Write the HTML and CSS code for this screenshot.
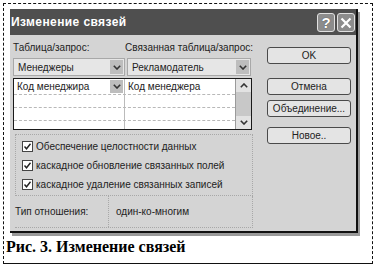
FILE: index.html
```html
<!DOCTYPE html>
<html lang="ru">
<head>
    <meta charset="UTF-8">
    <title>Изменение связей</title>
    <link rel="stylesheet" href="styles.css">
</head>
<body>
    <div class="sheet">
        <!-- Dialog window -->
        <div class="dialog">
            <div class="titlebar">
                <span class="title">Изменение связей</span>
                <div class="title-btns">
                    <span class="tbtn">?</span>
                    <span class="tbtn">
                        <svg width="12" height="12" viewBox="0 0 12 12"><path d="M1.5 1.5 L10.5 10.5 M10.5 1.5 L1.5 10.5" stroke="#fff" stroke-width="2.2" fill="none"/></svg>
                    </span>
                </div>
            </div>

            <div class="body">
                <div class="left">
                    <div class="labels">
                        <span class="lbl l1">Таблица/запрос:</span>
                        <span class="lbl">Связанная таблица/запрос:</span>
                    </div>

                    <div class="combos">
                        <div class="combo c1">
                            <span class="val">Менеджеры</span>
                            <span class="drop"><svg width="8" height="5" viewBox="0 0 8 5"><polyline points="0.8,0.8 4,4 7.2,0.8" stroke="#333" stroke-width="1.6" fill="none"/></svg></span>
                        </div>
                        <div class="combo c2">
                            <span class="val">Рекламодатель</span>
                            <span class="drop"><svg width="8" height="5" viewBox="0 0 8 5"><polyline points="0.8,0.8 4,4 7.2,0.8" stroke="#333" stroke-width="1.6" fill="none"/></svg></span>
                        </div>
                    </div>

                    <!-- Fields grid -->
                    <div class="grid">
                        <div class="rows">
                            <div class="row first">
                                <div class="cell k1">
                                    <span class="val">Код менеджира</span>
                                    <span class="drop"><svg width="8" height="5" viewBox="0 0 8 5"><polyline points="0.8,0.8 4,4 7.2,0.8" stroke="#333" stroke-width="1.6" fill="none"/></svg></span>
                                </div>
                                <div class="cell k2"><span class="val">Код менеджера</span></div>
                            </div>
                            <div class="row dotted"><div class="cell k1"></div><div class="cell k2"></div></div>
                            <div class="row dotted"><div class="cell k1"></div><div class="cell k2"></div></div>
                            <div class="row"><div class="cell k1"></div><div class="cell k2"></div></div>
                        </div>
                        <div class="scroll">
                            <span class="sbtn"><svg width="8" height="5" viewBox="0 0 8 5"><polyline points="0.8,4.2 4,1 7.2,4.2" stroke="#333" stroke-width="1.6" fill="none"/></svg></span>
                            <span class="track"></span>
                            <span class="sbtn"><svg width="8" height="5" viewBox="0 0 8 5"><polyline points="0.8,0.8 4,4 7.2,0.8" stroke="#333" stroke-width="1.6" fill="none"/></svg></span>
                        </div>
                    </div>

                    <!-- Options -->
                    <div class="group">
                        <label class="check"><span class="box"><svg width="9" height="9" viewBox="0 0 9 9"><polyline points="1.5,4.5 3.5,6.8 7.5,1.8" stroke="#222" stroke-width="1.4" fill="none"/></svg></span>Обеспечение целостности данных</label>
                        <label class="check"><span class="box"><svg width="9" height="9" viewBox="0 0 9 9"><polyline points="1.5,4.5 3.5,6.8 7.5,1.8" stroke="#222" stroke-width="1.4" fill="none"/></svg></span>каскадное обновление связанных полей</label>
                        <label class="check"><span class="box"><svg width="9" height="9" viewBox="0 0 9 9"><polyline points="1.5,4.5 3.5,6.8 7.5,1.8" stroke="#222" stroke-width="1.4" fill="none"/></svg></span>каскадное удаление связанных записей</label>
                    </div>

                    <div class="reltype">
                        <span class="rt-label">Тип отношения:</span>
                        <span class="rt-value">один-ко-многим</span>
                    </div>
                </div>

                <!-- Buttons -->
                <div class="buttons">
                    <button class="btn b-ok">OK</button>
                    <button class="btn b-cancel">Отмена</button>
                    <button class="btn b-join">Объединение...</button>
                    <button class="btn b-new">Новое..</button>
                </div>
            </div>
        </div>

        <div class="caption">Рис. 3. Изменение связей</div>
    </div>
</body>
</html>
```

FILE: styles.css
```css
/* General */
html, body {
    margin: 0;
    padding: 0;
    background: #fff;
}

body {
    padding: 3px;
    font-family: "Liberation Sans", Arial, sans-serif;
    font-size: 10px;
    color: #222;
}

/* Outer frame of the figure */
.sheet {
    width: 368px;
    height: 259px;
    border: 1px dashed #111;
    border-bottom: 1px solid #111;
    overflow: hidden;
}

/* Dialog window */
.dialog {
    margin: 5px 0 0 6px;
    width: 346px;
    height: 222px;
    background: #d4d4d4;
    border-right: 2px solid #111;
    border-bottom: 2px solid #111;
    box-shadow: 2px 3px 0 #9a9a9a;
    overflow: hidden;
}

.titlebar {
    height: 26px;
    background: #4f4f4f;
    display: flex;
    align-items: center;
    justify-content: space-between;
    padding-right: 1px;
}

.title {
    color: #fff;
    font-weight: bold;
    font-size: 12px;
    letter-spacing: 0.4px;
    margin-left: 1px;
}

.title-btns {
    display: flex;
    gap: 2px;
    margin-top: 1px;
}

.tbtn {
    width: 16px;
    height: 17px;
    border: 1px solid #e0e0e0;
    border-radius: 3px;
    background: #8c8c8c;
    color: #fff;
    font-weight: bold;
    font-size: 15px;
    line-height: 17px;
    display: flex;
    align-items: center;
    justify-content: center;
    text-shadow: 0 0 1px #333;
}

/* Body */
.body {
    display: flex;
    padding: 6px 0 0 3px;
}

.left {
    width: 240px;
}

.labels {
    display: flex;
    height: 13px;
    line-height: 13px;
    margin-bottom: 4px;
    white-space: nowrap;
}

.l1 {
    width: 115px;
}

.combos {
    display: flex;
    gap: 2px;
    height: 18px;
}

.combo {
    display: flex;
    align-items: center;
    justify-content: space-between;
    background: #e6e6e6;
    border: 1px solid #a8a8a8;
    box-sizing: border-box;
    padding-left: 4px;
}

.combo.c1 {
    width: 112px;
}

.combo.c2 {
    width: 124px;
}

.drop {
    width: 13px;
    height: 14px;
    margin-right: 1px;
    background: #bdbdbd;
    display: flex;
    align-items: center;
    justify-content: center;
}

/* Fields grid */
.grid {
    margin-top: 2px;
    width: 239px;
    height: 52px;
    box-sizing: border-box;
    border: 1px solid #1a1a1a;
    background: #fff;
    display: flex;
}

.rows {
    flex: 1;
    display: flex;
    flex-direction: column;
}

.row {
    display: flex;
    height: 12px;
}

.row.first {
    height: 15px;
}

.row.dotted {
    border-top: 1px dashed #b8b8b8;
}

.row:last-child {
    flex: 1;
    border-top: 1px dashed #b8b8b8;
}

.cell {
    display: flex;
    align-items: center;
    justify-content: space-between;
}

.cell.k1 {
    width: 111px;
    border-right: 1px solid #bbb;
    padding-left: 3px;
    box-sizing: border-box;
}

.cell.k2 {
    flex: 1;
    padding-left: 3px;
}

.cell .drop {
    height: 13px;
}

.scroll {
    width: 15px;
    border-left: 1px solid #9a9a9a;
    background: #d8d8d8;
    display: flex;
    flex-direction: column;
}

.sbtn {
    height: 13px;
    display: flex;
    align-items: center;
    justify-content: center;
    background: #e2e2e2;
}

.track {
    flex: 1;
    background: #c8c8c8;
}

/* Options group */
.group {
    margin: 4px 0 0 2px;
    width: 238px;
    height: 62px;
    box-sizing: border-box;
    border: 1px dotted #a8a8a8;
    padding: 4px 0 0 6px;
    display: flex;
    flex-direction: column;
    gap: 5px;
}

.check {
    display: flex;
    align-items: center;
    height: 14px;
    white-space: nowrap;
}

.box {
    width: 11px;
    height: 11px;
    box-sizing: border-box;
    border: 1px solid #444;
    background: #fff;
    margin-right: 3px;
    display: flex;
    align-items: center;
    justify-content: center;
}

/* Relation type */
.reltype {
    margin-left: 2px;
    width: 238px;
    height: 32px;
    box-sizing: border-box;
    border-right: 1px dotted #a8a8a8;
    border-bottom: 1px dotted #a8a8a8;
    display: flex;
    align-items: center;
}

.rt-label {
    width: 93px;
    height: 100%;
    border-right: 1px dotted #a8a8a8;
    display: flex;
    align-items: center;
}

.rt-value {
    padding-left: 7px;
}

/* Buttons */
.buttons {
    margin-left: 14px;
    display: flex;
    flex-direction: column;
}

.btn {
    width: 84px;
    height: 17px;
    padding: 0;
    font-family: "Liberation Sans", Arial, sans-serif;
    font-size: 10px;
    color: #222;
    background: #e4e4e4;
    border: 1px solid #4a4a4a;
    border-radius: 3px;
}

.b-ok {
    margin-top: 6px;
}

.b-cancel {
    margin-top: 14px;
}

.b-join {
    margin-top: 5px;
}

.b-new {
    margin-top: 10px;
}

/* Figure caption */
.caption {
    margin: 5px 0 0 2px;
    font-family: "Liberation Serif", "Times New Roman", serif;
    font-weight: bold;
    font-size: 16px;
    line-height: 18px;
    color: #000;
}
```
